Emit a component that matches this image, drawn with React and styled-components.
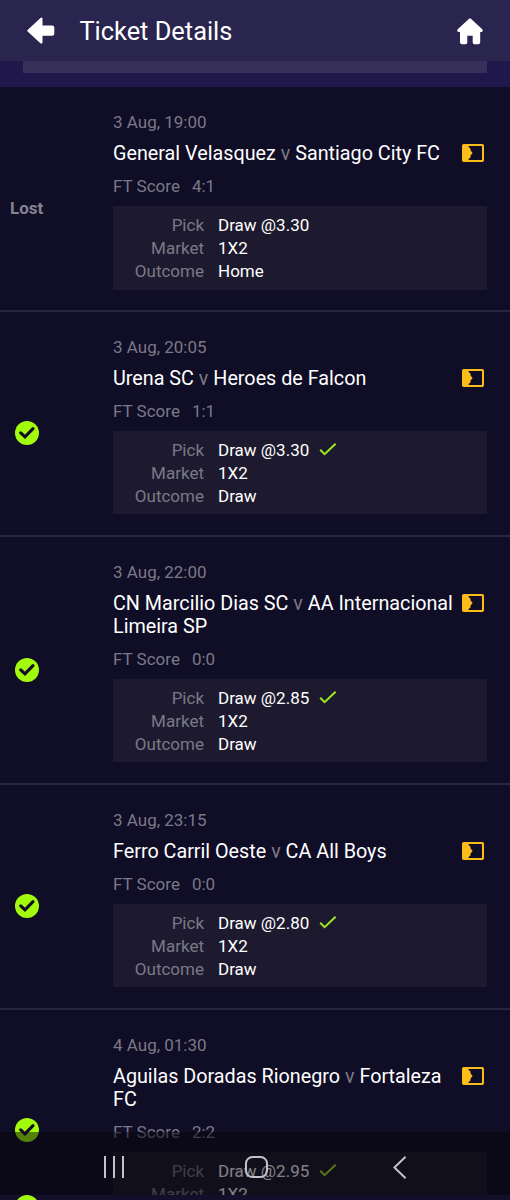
import styled, { createGlobalStyle } from 'styled-components';

const matches = [
  {
    date: '3 Aug, 19:00',
    home: 'General Velasquez',
    away: 'Santiago City FC',
    score: '4:1',
    pick: 'Draw @3.30',
    outcome: 'Home',
    won: false,
  },
  {
    date: '3 Aug, 20:05',
    home: 'Urena SC',
    away: 'Heroes de Falcon',
    score: '1:1',
    pick: 'Draw @3.30',
    outcome: 'Draw',
    won: true,
  },
  {
    date: '3 Aug, 22:00',
    home: 'CN Marcilio Dias SC',
    away: 'AA Internacional Limeira SP',
    score: '0:0',
    pick: 'Draw @2.85',
    outcome: 'Draw',
    won: true,
  },
  {
    date: '3 Aug, 23:15',
    home: 'Ferro Carril Oeste',
    away: 'CA All Boys',
    score: '0:0',
    pick: 'Draw @2.80',
    outcome: 'Draw',
    won: true,
  },
  {
    date: '4 Aug, 01:30',
    home: 'Aguilas Doradas Rionegro',
    away: 'Fortaleza FC',
    score: '2:2',
    pick: 'Draw @2.95',
    outcome: 'Draw',
    won: true,
    cut: true,
  },
];

function WonIcon() {
  return (
    <svg width="24" height="24" viewBox="0 0 24 24" fill="none">
      <circle cx="12" cy="12" r="12" fill="#a2fb0c" />
      <path
        d="M5.7 11.8L10 15.9L18 7.7"
        stroke="#100d26"
        strokeWidth="3.1"
        strokeLinecap="round"
        strokeLinejoin="miter"
      />
    </svg>
  );
}

function TicketIcon() {
  return (
    <svg width="22" height="18" viewBox="0 0 22 18" fill="none">
      <rect x="1" y="1" width="20" height="16" rx="0.8" stroke="#fcbd1b" strokeWidth="2" />
      <path d="M1 1H6.6V3L8.4 4.6L8.6 6.6L10.6 9L8.6 11.4L8.4 13.4L6.6 15V17H1Z" fill="#fcbd1b" />
    </svg>
  );
}

function Match({ match }) {
  return (
    <MatchRow>
      <Status $won={match.won} $cut={match.cut}>
        {match.won ? <WonIcon /> : 'Lost'}
      </Status>
      <Body>
        <Muted>{match.date}</Muted>
        <TitleRow>
          <Teams>
            {match.home} <Versus>v</Versus> {match.away}
          </Teams>
          <TicketIcon />
        </TitleRow>
        <Score>
          <span>FT Score</span>
          <span>{match.score}</span>
        </Score>
        <Card>
          <Label>Pick</Label>
          <Value>
            {match.pick}
            {match.won && (
              <svg width="18" height="14" viewBox="0 0 18 14" fill="none">
                <path d="M1.2 6.8L5.6 11.2L16.6 0.8" stroke="#a2e820" strokeWidth="2" />
              </svg>
            )}
          </Value>
          <Label>Market</Label>
          <Value>1X2</Value>
          <Label>Outcome</Label>
          <Value>{match.outcome}</Value>
        </Card>
      </Body>
    </MatchRow>
  );
}

export default function App() {
  return (
    <Screen>
      <GlobalStyle />
      <Header>
        <svg width="28" height="28" viewBox="0 0 28 28">
          <path
            d="M0.6 13.1L13.2 1.2Q15.4 -0.3 15.5 2V8.4H25.2Q27.3 8.4 27.3 10.5V16.8Q27.3 18.8 25.2 18.8H15.5V25.3Q15.2 27.6 13.2 26L0.6 14.4Q0 13.7 0.6 13.1Z"
            fill="#fff"
          />
        </svg>
        <HeaderTitle>Ticket Details</HeaderTitle>
        <svg width="26" height="27" viewBox="0 0 26 27">
          <path
            d="M12.1 0.7Q13 0 13.9 0.7L25.3 11.3Q26.5 13.6 24.2 14H23.2V24.2Q23.2 26.3 21.2 26.3H17.5Q15.7 26.3 15.7 24.5V17.7H10.3V24.5Q10.3 26.3 8.5 26.3H4.8Q3 26.3 3 24.2V14H1.8Q-0.5 13.6 0.7 11.3Z"
            fill="#fff"
          />
        </svg>
      </Header>
      <SummaryEdge>
        <SummaryBar />
      </SummaryEdge>
      {matches.map((match) => (
        <Match key={match.date} match={match} />
      ))}
      <NavBar>
        <svg width="20" height="22" viewBox="0 0 20 22" stroke="#c4c3c9" strokeWidth="2">
          <path d="M1 0V22M10 0V22M19 0V22" />
        </svg>
        <HomeKey width="23" height="22" viewBox="0 0 23 22" fill="none" stroke="#c4c3c9" strokeWidth="2">
          <rect x="1" y="1" width="21" height="20" rx="6.5" />
        </HomeKey>
        <svg width="14" height="23" viewBox="0 0 14 23" fill="none" stroke="#c4c3c9" strokeWidth="2">
          <path d="M12.6 0.8L1.4 11.5L12.6 22.2" />
        </svg>
      </NavBar>
      <BottomEdge>
        <WonIcon />
      </BottomEdge>
    </Screen>
  );
}

const GlobalStyle = createGlobalStyle`
  body {
    margin: 0;
    background: #100d26;
  }
  * {
    box-sizing: border-box;
  }
  svg {
    display: block;
    flex-shrink: 0;
  }
`;

const Screen = styled.div`
  position: relative;
  width: 510px;
  height: 1200px;
  overflow: hidden;
  background: #100d26;
  color: #fff;
  font-family: Roboto, 'Liberation Sans', sans-serif;
  font-size: 17px;
  line-height: 23px;
`;

const Header = styled.header`
  display: flex;
  align-items: center;
  height: 61px;
  padding: 1px 27px 0;
  background: #29254f;
`;

const HeaderTitle = styled.h1`
  flex: 1;
  margin: 0 0 0 24.4px;
  font-size: 25.4px;
  font-weight: 400;
  line-height: 32px;
`;

const SummaryEdge = styled.div`
  height: 26px;
  padding: 0 23px;
  background: #20184b;
`;

const SummaryBar = styled.div`
  height: 12px;
  background: #37305b;
`;

const MatchRow = styled.section`
  display: flex;
  padding: 24.2px 23px 20.3px 0;
  border-bottom: 2px solid #28253f;
  margin-bottom: -0.2px;
`;

const Status = styled.div`
  display: flex;
  align-items: center;
  width: 113px;
  padding-top: ${({ $cut }) => ($cut ? 0 : 16)}px;
  padding-bottom: ${({ $cut }) => ($cut ? 8 : 0)}px;
  padding-left: ${({ $won }) => ($won ? 15 : 10)}px;
  color: #85838f;
  font-weight: 700;
`;

const Body = styled.div`
  flex: 1;
`;

const Muted = styled.div`
  color: #7b7986;
`;

const TitleRow = styled.div`
  display: flex;
  justify-content: space-between;
  padding: 8px 3px 0 0;

  svg {
    margin-top: 2px;
  }
`;

const Teams = styled.div`
  width: 345px;
  font-size: 19.75px;
  line-height: 23.2px;
`;

const Versus = styled.span`
  color: #7b7986;
`;

const Score = styled(Muted)`
  display: flex;
  gap: 12px;
  padding: 10px 0 7.8px;
`;

const Card = styled.div`
  display: grid;
  grid-template-columns: 91px 1fr;
  column-gap: 14px;
  padding: 8px 0 6.5px;
  background: #1d1a2f;
`;

const Label = styled.div`
  color: #7b7986;
  text-align: right;
`;

const Value = styled.div`
  display: flex;
  align-items: center;
  gap: 10px;
`;

// Translucent system navigation over the list
const NavBar = styled.nav`
  position: absolute;
  left: 0;
  right: 0;
  bottom: 5px;
  display: flex;
  align-items: center;
  justify-content: space-between;
  height: 63px;
  padding: 7px 103px 0 104px;
  background: rgba(5, 4, 9, 0.5);
`;

const HomeKey = styled.svg`
  margin-right: 5px;
`;

const BottomEdge = styled.div`
  position: absolute;
  left: 0;
  right: 0;
  bottom: 0;
  height: 5px;
  padding-left: 15px;
  overflow: hidden;
  background: #130f2b;
`;
